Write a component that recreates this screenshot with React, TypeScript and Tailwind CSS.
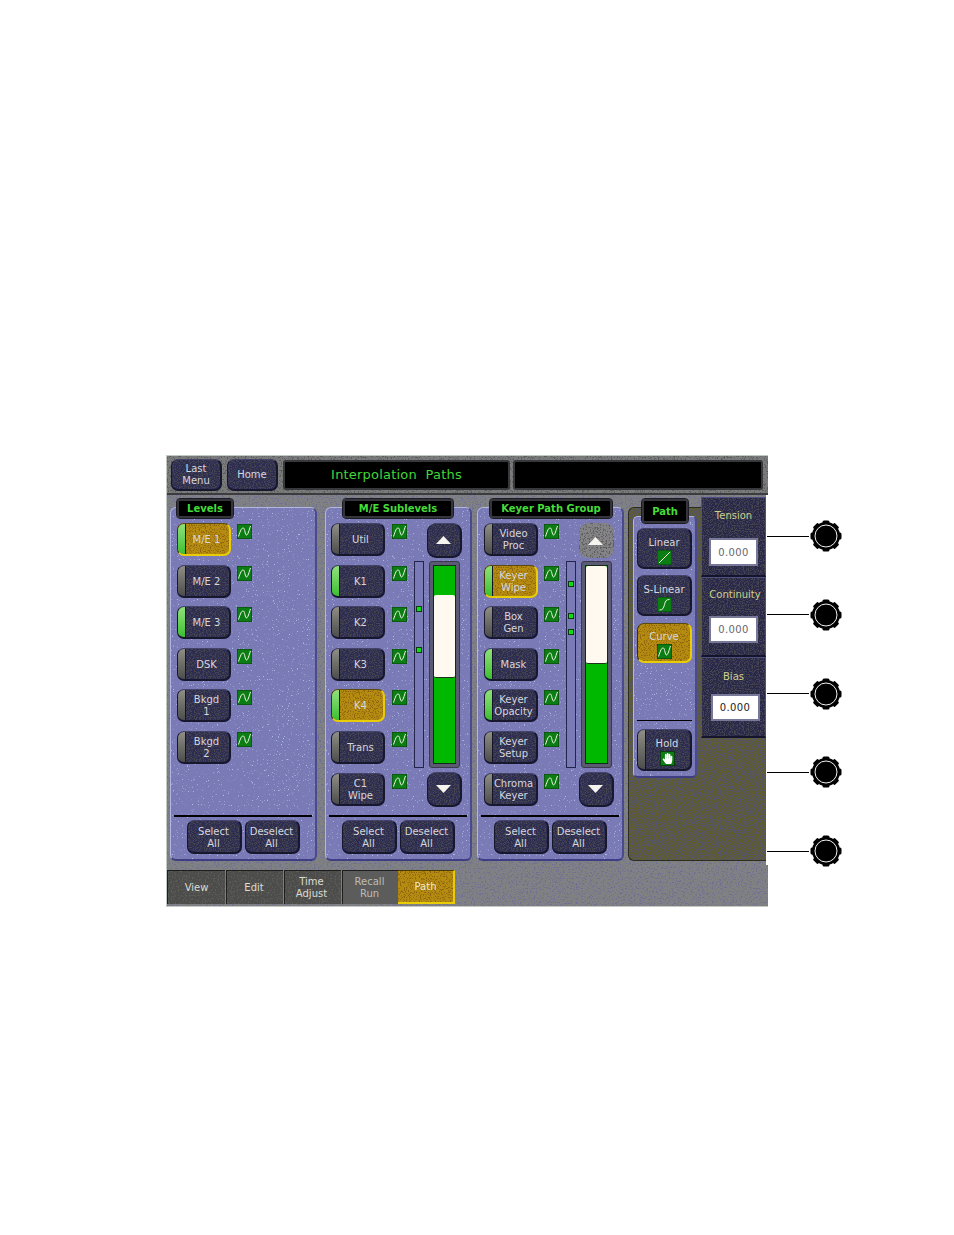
import React from "react";
import { FaHandPaper } from "react-icons/fa";

type NoiseKind = "nGray" | "nPanel" | "nDark" | "nOlive" | "nGold" | "nTab";

function Defs() {
  const f = (id: string, freq: string, seed: number, rgb: string, k: number, c: number) => (
    <filter id={id} x="0" y="0" width="100%" height="100%" colorInterpolationFilters="sRGB">
      <feTurbulence type="fractalNoise" baseFrequency={freq} numOctaves={2} seed={seed} />
      <feColorMatrix type="matrix" values={`0 0 0 0 ${rgb.split(" ")[0]} 0 0 0 0 ${rgb.split(" ")[1]} 0 0 0 0 ${rgb.split(" ")[2]} ${k} 0 0 0 ${c}`} />
    </filter>
  );
  return (
    <svg className="absolute h-0 w-0" aria-hidden="true">
      {f("nGray", "0.55 0.8", 3, "0.43 0.43 0.58", 7, -3.8)}
      {f("nPanel", "0.8", 7, "0.70 0.74 0.90", 7, -4.6)}
      {f("nDark", "0.8", 11, "0.27 0.27 0.31", 7, -3.3)}
      {f("nOlive", "0.55 0.8", 5, "0.33 0.33 0.40", 7, -3.1)}
      {f("nGold", "0.8", 13, "0.56 0.40 0.05", 7, -3.6)}
      {f("nTab", "0.7", 17, "0.36 0.36 0.35", 7, -3.7)}
    </svg>
  );
}

function Noise({ kind }: { kind: NoiseKind }) {
  return (
    <svg className="pointer-events-none absolute inset-0 h-full w-full overflow-hidden rounded-[inherit]" aria-hidden="true">
      <rect width="100%" height="100%" filter={`url(#${kind})`} />
    </svg>
  );
}

function CurveIcon({ kind = "curve" }: { kind?: "curve" | "linear" | "slinear" }) {
  const d =
    kind === "linear"
      ? "M2 13L13 2"
      : kind === "slinear"
        ? "M2.5 13C6 13 6.5 11 7.5 7.5C8.5 4 9 2.5 12.5 2.5"
        : "M1.5 12.5C3.5 6.5 4.5 3.5 6.5 4C8 5 8 11 9.5 11C11 11 12 6 13.5 2";
  return (
    <svg width="15" height="15" viewBox="0 0 15 15" className="relative block shrink-0">
      <rect x="0" y="0" width="15" height="15" fill="#0b7d12" stroke="#0c3d10" strokeWidth="1" />
      <path d={d} fill="none" stroke="#f0f6e8" strokeWidth="1" />
    </svg>
  );
}

function Arrow({ down }: { down?: boolean }) {
  return (
    <svg width="15" height="8" viewBox="0 0 15 8" className="relative">
      <path d={down ? "M0 0H15L7.5 8Z" : "M7.5 0L15 8H0Z"} fill="#f6f4ee" />
    </svg>
  );
}

function Btn({
  tab,
  active,
  className = "w-[54px] h-[33px]",
  inner = "pt-[2px]",
  children,
}: {
  tab?: "gray" | "green";
  active?: boolean;
  className?: string;
  inner?: string;
  children: React.ReactNode;
}) {
  return (
    <div
      className={`relative flex shrink-0 overflow-hidden rounded-[7px] ${className} ${
        active
          ? "border-b-2 border-r-2 border-l border-t border-b-[#e8cc08] border-r-[#e8cc08] border-l-[#3a3208] border-t-[#5a4a10] bg-[#b58c10]"
          : "border border-b-2 border-r-2 border-[#17172e] border-t-[#44446a] bg-[#2c2b52]"
      }`}
    >
      <Noise kind={active ? "nGold" : "nDark"} />
      {tab && (
        <div
          className={`relative w-[8px] shrink-0 border-r border-[#15152a] bg-gradient-to-b ${
            tab === "green" ? "from-[#8ee07a] to-[#38c02c]" : "from-[#8f8f86] to-[#4d4d4c]"
          }`}
        />
      )}
      <div
        className={`relative flex min-w-0 flex-1 flex-col items-center justify-center text-center text-[10px] leading-[12px] text-[#d6d6de] ${
          tab ? "pr-[2px]" : ""
        } ${inner}`}
      >
        {children}
      </div>
    </div>
  );
}

function Label({ className, children }: { className: string; children: React.ReactNode }) {
  return (
    <div
      className={`absolute z-10 flex items-center justify-center rounded-[3px] border-2 border-[#34343a] bg-black text-[10px] font-bold text-[#46dc3a] outline outline-1 outline-[#1c1c24] ${className}`}
    >
      {children}
    </div>
  );
}

function Panel({ className, label, children }: { className?: string; label: React.ReactNode; children: React.ReactNode }) {
  return (
    <div
      className={`relative flex h-[354px] w-[147px] shrink-0 flex-col rounded-[6px] border border-b-2 border-r-2 border-[#b0b6e0] border-b-[#3e3e84] border-r-[#4a4a8e] bg-[#7a7ab6] ${className ?? ""}`}
    >
      <Noise kind="nPanel" />
      {label}
      {children}
    </div>
  );
}

function Footer() {
  return (
    <div className="relative mx-[3px] mb-[5px] mt-auto">
      <div className="h-[2px] bg-black" />
      <div className="mt-[3px] flex justify-center gap-[3px]">
        <Btn className="h-[34px] w-[55px]">
          Select
          <br />
          All
        </Btn>
        <Btn className="h-[34px] w-[55px]">
          Deselect
          <br />
          All
        </Btn>
      </div>
    </div>
  );
}

type Row = { a: string; b?: string; tab: "gray" | "green"; active?: boolean };

function Rows({ rows, gap }: { rows: Row[]; gap: string }) {
  return (
    <div className="relative flex flex-col gap-[8.6px]">
      {rows.map((r) => (
        <div key={r.a + (r.b ?? "")} className={`flex items-start ${gap}`}>
          <Btn tab={r.tab} active={r.active}>
            {r.a}
            {r.b && <br />}
            {r.b}
          </Btn>
          <div className="mt-px">
            <CurveIcon />
          </div>
        </div>
      ))}
    </div>
  );
}

function ArrowBtn({ down, disabled }: { down?: boolean; disabled?: boolean }) {
  return (
    <div
      className={`relative flex h-[35px] w-[35px] items-center justify-center overflow-hidden rounded-[9px] pr-[2px] ${
        disabled ? "bg-[#848488]" : "border border-b-2 border-r-2 border-[#17172e] border-t-[#44446a] bg-[#2c2b52]"
      }`}
    >
      <Noise kind={disabled ? "nTab" : "nDark"} />
      <Arrow down={down} />
    </div>
  );
}

function Scroller({
  stripClass,
  dots,
  topGreen,
  thumb,
  disabledUp,
}: {
  stripClass: string;
  dots: string[];
  topGreen: string;
  thumb: string;
  disabledUp?: boolean;
}) {
  return (
    <>
      <div className={`relative mt-[38px] h-[207px] w-[10px] border border-[#24244e] bg-[#7a7ab6] ${stripClass}`}>
        {dots.map((d) => (
          <div key={d} className={`absolute left-px h-[6px] w-[6px] border border-[#0a3a10] bg-[#12dc18] ${d}`} />
        ))}
      </div>
      <div className="ml-[3px] flex w-[35px] flex-col">
        <ArrowBtn disabled={disabledUp} />
        <div className="ml-[2px] mt-[3px] h-[207px] w-[31px] rounded-[3px] border border-[#3a3a4c] bg-[#5a5a72] p-[3px]">
          <div className="flex h-full flex-col overflow-hidden border border-[#142a18] bg-[#00b800]">
            <div className={topGreen} />
            <div className={`rounded-[2px] border-b border-[#20301c] bg-[#fff9ef] ${thumb}`} />
          </div>
        </div>
        <div className="mt-[4px]">
          <ArrowBtn down />
        </div>
      </div>
    </>
  );
}

function ValuePanel({
  title,
  value,
  className,
  labelClass,
  boxClass,
}: {
  title: string;
  value: string;
  className: string;
  labelClass: string;
  boxClass: string;
}) {
  return (
    <div
      className={`relative flex w-[65px] flex-col items-center border border-b-2 border-[#505080] border-b-[#14142c] bg-[#28274a] ${className}`}
    >
      <Noise kind="nDark" />
      <div className={`relative text-[10px] leading-[12px] text-[#cfd08c] ${labelClass}`}>{title}</div>
      <div
        className={`relative flex items-center justify-center border-2 border-[#787898] bg-white text-[10px] tracking-[0.4px] ${boxClass}`}
      >
        {value}
      </div>
    </div>
  );
}

function PathBtn({ title, icon, active }: { title: string; icon: "curve" | "linear" | "slinear"; active?: boolean }) {
  return (
    <Btn active={active} inner="pt-[5px]" className={active ? "h-[40px] w-[55px]" : "h-[41px] w-[55px]"}>
      {title}
      <div className="mt-[1px]">
        <CurveIcon kind={icon} />
      </div>
    </Btn>
  );
}

function Knob() {
  return (
    <div className="flex h-[34px] items-center">
      <div className="h-px w-[42px] bg-black" />
      <svg width="34" height="34" viewBox="0 0 34 34">
        {[0, 45, 90, 135, 180, 225, 270, 315].map((a) => (
          <rect key={a} x="13.5" y="1.5" width="7" height="5" rx="1.5" fill="#000" transform={`rotate(${a} 17 17)`} />
        ))}
        <circle cx="17" cy="17" r="14" fill="#000" />
        <circle cx="17" cy="17" r="11" fill="#000" stroke="#f2f2f2" strokeWidth="1" />
      </svg>
    </div>
  );
}

function Tab({ className, dim, children }: { className: string; dim?: boolean; children: React.ReactNode }) {
  return (
    <div
      className={`relative flex h-[34px] items-center justify-center border-l border-t border-[#1e1e1c] bg-[#4c4c4a] text-center text-[10px] leading-[12px] ${
        dim ? "text-[#bcbcb4]" : "text-[#dcdcd4]"
      } ${className}`}
    >
      <Noise kind="nTab" />
      <span className="relative">{children}</span>
    </div>
  );
}

const levels: Row[] = [
  { a: "M/E 1", tab: "green", active: true },
  { a: "M/E 2", tab: "gray" },
  { a: "M/E 3", tab: "green" },
  { a: "DSK", tab: "gray" },
  { a: "Bkgd", b: "1", tab: "gray" },
  { a: "Bkgd", b: "2", tab: "gray" },
];
const sub: Row[] = [
  { a: "Util", tab: "gray" },
  { a: "K1", tab: "green" },
  { a: "K2", tab: "gray" },
  { a: "K3", tab: "gray" },
  { a: "K4", tab: "green", active: true },
  { a: "Trans", tab: "gray" },
  { a: "C1", b: "Wipe", tab: "gray" },
];
const keyer: Row[] = [
  { a: "Video", b: "Proc", tab: "gray" },
  { a: "Keyer", b: "Wipe", tab: "green", active: true },
  { a: "Box", b: "Gen", tab: "gray" },
  { a: "Mask", tab: "green" },
  { a: "Keyer", b: "Opacity", tab: "green" },
  { a: "Keyer", b: "Setup", tab: "gray" },
  { a: "Chroma", b: "Keyer", tab: "gray" },
];

export default function App() {
  return (
    <div className="relative flex h-[1235px] w-[954px] items-start overflow-hidden bg-white pl-[166px] pt-[455px] font-['DejaVu_Sans',sans-serif]">
      <Defs />
      <div className="relative flex h-[452px] w-[602px] shrink-0 flex-col border-b border-l border-t border-[#c2c8c2] bg-[#808182]">
        <Noise kind="nGray" />

        {/* top bar */}
        <div className="relative flex h-[39px] shrink-0 gap-[5px] border-b-2 border-[#3c3c3e] bg-[#7a7b7c] pl-[4px] pt-[3px]">
          <Noise kind="nTab" />
          <Btn className="h-[32px] w-[51px]" inner="">
            Last
            <br />
            Menu
          </Btn>
          <Btn className="h-[32px] w-[51px]" inner="">
            Home
          </Btn>
          <div className="relative mt-px flex h-[30px] w-[227px] items-center justify-center rounded-[3px] border-2 border-[#38383c] bg-black text-[13px] tracking-[0.2px] text-[#42d638]">
            Interpolation&nbsp; Paths
          </div>
          <div className="relative -ml-[2px] mt-px h-[30px] w-[250px] rounded-[3px] border-2 border-[#38383c] bg-black" />
        </div>

        {/* main */}
        <div className="flex h-[370px] shrink-0">
          <div className="flex w-[599px] items-start pl-[3px] pt-[12px]">
            <Panel label={<Label className="-top-[9px] left-[6px] h-[19px] w-[56px]">Levels</Label>}>
              <div className="pl-[6px] pt-[15px]">
                <Rows rows={levels} gap="gap-[6px]" />
              </div>
              <Footer />
            </Panel>

            <Panel
              className="ml-[8px]"
              label={<Label className="-top-[9px] left-[17px] h-[19px] w-[110px]">M/E Sublevels</Label>}
            >
              <div className="relative flex pl-[5px] pt-[15px]">
                <Rows rows={sub} gap="gap-[7px]" />
                <Scroller
                  stripClass="ml-[7px]"
                  dots={["top-[44px]", "top-[85px]"]}
                  topGreen="h-[29px] shrink-0"
                  thumb="h-[83px] shrink-0"
                />
              </div>
              <Footer />
            </Panel>

            <Panel
              className="ml-[5px]"
              label={<Label className="-top-[9px] left-[12px] h-[19px] w-[122px]">Keyer Path Group</Label>}
            >
              <div className="relative flex pl-[6px] pt-[15px]">
                <Rows rows={keyer} gap="gap-[6px]" />
                <Scroller
                  stripClass="ml-[7px]"
                  dots={["top-[19px]", "top-[51px]", "top-[67px]"]}
                  topGreen="h-0"
                  thumb="h-[98px] shrink-0"
                  disabledUp
                />
              </div>
              <Footer />
            </Panel>

            {/* path + values */}
            <div className="relative ml-[4px] flex h-[354px] w-[138px] shrink-0 rounded-l-[6px] border-y border-l border-[#2c2c20] bg-[#5f5d30]">
              <Noise kind="nOlive" />
              <div className="relative ml-[4px] mt-[8px] flex h-[262px] w-[64px] shrink-0 flex-col rounded-[5px] border border-b-2 border-r-2 border-[#b0b6e0] border-b-[#3e3e84] border-r-[#4a4a8e] bg-[#7a7ab6] pl-[3px]">
                <Noise kind="nPanel" />
                <Label className="-top-[18px] left-[8px] h-[24px] w-[46px]">Path</Label>
                <div className="relative mt-[11px] flex flex-col gap-[6px]">
                  <PathBtn title="Linear" icon="linear" />
                  <PathBtn title="S-Linear" icon="slinear" />
                  <div className="mt-px">
                    <PathBtn title="Curve" icon="curve" active />
                  </div>
                </div>
                <div className="relative mb-[5px] mt-auto">
                  <div className="h-px w-[55px] bg-black" />
                  <div className="mt-[8px]">
                    <Btn tab="gray" className="h-[42px] w-[55px]" inner="pt-[5px]">
                      Hold
                      <div className="relative mt-px flex h-[15px] w-[15px] items-center justify-center border border-[#0c3d10] bg-[#0b7d12]">
                        <FaHandPaper className="text-[11px] text-white" />
                      </div>
                    </Btn>
                  </div>
                </div>
              </div>
              <div className="relative ml-[4px] -mt-[11px] flex w-[65px] shrink-0 flex-col self-start">
                <ValuePanel
                  title="Tension"
                  value="0.000"
                  className="h-[80px]"
                  labelClass="mt-[12px]"
                  boxClass="mt-[16px] h-[28px] w-[49px] text-[#666670]"
                />
                <ValuePanel
                  title="Continuity"
                  value="0.000"
                  className="h-[80px]"
                  labelClass="mt-[11px] ml-[3px]"
                  boxClass="mt-[15px] h-[27px] w-[49px] text-[#666670]"
                />
                <ValuePanel
                  title="Bias"
                  value="0.000"
                  className="h-[81px]"
                  labelClass="mt-[13px]"
                  boxClass="mt-[11px] ml-[3px] h-[27px] w-[49px] text-[#1c1c1c]"
                />
              </div>
            </div>
          </div>
          <div className="relative h-full w-[2px] bg-white" />
        </div>

        {/* tabs */}
        <div className="relative flex gap-px pt-[5px]">
          <Tab className="w-[58px]">View</Tab>
          <Tab className="w-[57px] pr-[2px]">Edit</Tab>
          <Tab className="w-[57px] pr-[3px]">
            Time
            <br />
            Adjust
          </Tab>
          <Tab className="w-[56px] bg-[#5c5c5c] pr-[2px]" dim>
            Recall
            <br />
            Run
          </Tab>
          <div className="relative -ml-px flex h-[34px] w-[57px] items-center justify-center border-b-2 border-r-2 border-t border-b-[#e8cc08] border-r-[#e8cc08] border-t-[#4a3c08] bg-[#b58c10] text-[10px] text-[#efe8c8]">
            <Noise kind="nGold" />
            <span className="relative">Path</span>
          </div>
        </div>
      </div>

      {/* knobs */}
      <div className="relative -ml-px mt-[64px] flex flex-col gap-[44.75px]">
        <Knob />
        <Knob />
        <Knob />
        <Knob />
        <Knob />
      </div>
    </div>
  );
}
